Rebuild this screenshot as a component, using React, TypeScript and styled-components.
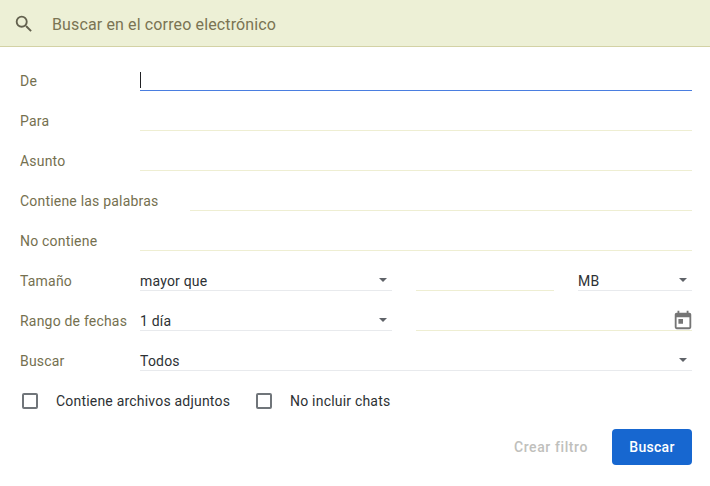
import React from 'react';
import styled, {createGlobalStyle} from 'styled-components';

const labelColor = '#75704f';
const softLine = '#eeeed2';
const greyLine = '#e8eaed';

const GlobalStyle = createGlobalStyle`
  html, body {
    margin: 0;
    padding: 0;
    background: #fff;
  }
  body {
    font-family: Roboto, "Liberation Sans", sans-serif;
    font-size: 14px;
    letter-spacing: 0.2px;
    color: #3c4043;
  }
`;

const Panel = styled.div`
  width: 710px;
  height: 486px;
  overflow: hidden;
`;

const SearchBar = styled.header`
  display: flex;
  align-items: center;
  box-sizing: border-box;
  height: 47px;
  padding-left: 13px;
  background: #edf0d6;
  border-bottom: 1px solid #d3d2a5;
`;

const SearchIcon = styled.svg`
  width: 22px;
  height: 22px;
  margin-top: 2px;
  margin-right: 17px;
  fill: #63614e;
`;

const SearchText = styled.span`
  padding-top: 2px;
  font-size: 16px;
  letter-spacing: 0.13px;
  color: #7a7453;
`;

const Form = styled.form`
  display: flex;
  flex-direction: column;
  padding: 4px 18px 0 20px;
`;

const Row = styled.div`
  display: flex;
  align-items: flex-end;
  height: 40px;
`;

const Label = styled.label<{$width?: number}>`
  flex: none;
  width: ${p => p.$width ?? 120}px;
  height: 20px;
  line-height: 20px;
  color: ${labelColor};
`;

const Field = styled.div<{$focused?: boolean; $width?: number; $gap?: number}>`
  position: relative;
  display: flex;
  align-items: center;
  justify-content: flex-end;
  box-sizing: border-box;
  flex: ${p => (p.$width ? 'none' : '1')};
  width: ${p => (p.$width ? `${p.$width}px` : 'auto')};
  height: 21px;
  margin-left: ${p => p.$gap ?? 0}px;
  border-bottom: 1px solid ${p => (p.$focused ? '#4a7ee0' : softLine)};
`;

const Caret = styled.span`
  position: absolute;
  left: 0;
  top: 2px;
  width: 1px;
  height: 16px;
  background: #202124;
`;

const Select = styled.div<{$width?: number; $gap?: number}>`
  display: flex;
  align-items: center;
  justify-content: space-between;
  box-sizing: border-box;
  flex: ${p => (p.$width ? 'none' : '1')};
  width: ${p => (p.$width ? `${p.$width}px` : 'auto')};
  height: 21px;
  margin-left: ${p => p.$gap ?? 0}px;
  border-bottom: 1px solid ${greyLine};
  line-height: 20px;
  color: #2d3134;
`;

const SelectValue = styled.span`
  padding-top: 2px;
`;

const Arrow = styled.span`
  width: 0;
  height: 0;
  margin-right: 5px;
  border-left: 4.5px solid transparent;
  border-right: 4.5px solid transparent;
  border-top: 4px solid #5f6368;
`;

const CalendarIcon = styled.svg`
  width: 22px;
  height: 22px;
  margin-right: -2px;
  margin-bottom: 1px;
  fill: #757575;
`;

const CheckRow = styled.div`
  display: flex;
  align-items: center;
  height: 20px;
  margin-top: 20px;
  padding-left: 2px;
`;

const Check = styled.label`
  display: flex;
  align-items: center;
  margin-right: 26px;
  color: #2d3134;
`;

const Box = styled.span`
  box-sizing: border-box;
  width: 16px;
  height: 16px;
  margin-right: 18px;
  border: 2px solid #70757a;
  border-radius: 2px;
`;

const Actions = styled.div`
  display: flex;
  align-items: center;
  justify-content: flex-end;
  margin-top: 18px;
`;

const GhostButton = styled.span`
  margin-right: 24px;
  font-weight: 500;
  letter-spacing: 0.6px;
  color: #bfc0bc;
`;

const PrimaryButton = styled.button`
  box-sizing: border-box;
  width: 80px;
  height: 36px;
  padding: 0;
  border: 0;
  border-radius: 4px;
  background: #1767d0;
  color: #fff;
  font: 500 14px Roboto, "Liberation Sans", sans-serif;
  letter-spacing: 0.3px;
`;

const App: React.FC = () => (
  <Panel>
    <GlobalStyle />
    <SearchBar>
      <SearchIcon viewBox="0 0 24 24">
        <path d="M15.5 14h-.79l-.28-.27A6.47 6.47 0 0 0 16 9.5 6.5 6.5 0 1 0 9.5 16c1.61 0 3.09-.59 4.23-1.57l.27.28v.79l5 4.99L20.49 19l-4.99-5zm-6 0C7.01 14 5 11.99 5 9.5S7.01 5 9.5 5 14 7.01 14 9.5 11.99 14 9.5 14z" />
      </SearchIcon>
      <SearchText>Buscar en el correo electrónico</SearchText>
    </SearchBar>
    <Form>
      <Row>
        <Label>De</Label>
        <Field $focused>
          <Caret />
        </Field>
      </Row>
      <Row>
        <Label>Para</Label>
        <Field />
      </Row>
      <Row>
        <Label>Asunto</Label>
        <Field />
      </Row>
      <Row>
        <Label $width={170}>Contiene las palabras</Label>
        <Field />
      </Row>
      <Row>
        <Label>No contiene</Label>
        <Field />
      </Row>
      <Row>
        <Label>Tamaño</Label>
        <Select $width={252}>
          <SelectValue>mayor que</SelectValue>
          <Arrow />
        </Select>
        <Field $width={138} $gap={24} />
        <Select $gap={24}>
          <SelectValue>MB</SelectValue>
          <Arrow />
        </Select>
      </Row>
      <Row>
        <Label>Rango de fechas</Label>
        <Select $width={252}>
          <SelectValue>1 día</SelectValue>
          <Arrow />
        </Select>
        <Field $gap={24}>
          <CalendarIcon viewBox="0 0 24 24">
            <path d="M19 4h-1V2h-2v2H8V2H6v2H5a2 2 0 0 0-2 2v14a2 2 0 0 0 2 2h14a2 2 0 0 0 2-2V6a2 2 0 0 0-2-2zm0 16H5V9h14v11zM7 11h5v5H7z" />
          </CalendarIcon>
        </Field>
      </Row>
      <Row>
        <Label>Buscar</Label>
        <Select>
          <SelectValue>Todos</SelectValue>
          <Arrow />
        </Select>
      </Row>
      <CheckRow>
        <Check>
          <Box />
          Contiene archivos adjuntos
        </Check>
        <Check>
          <Box />
          No incluir chats
        </Check>
      </CheckRow>
      <Actions>
        <GhostButton>Crear filtro</GhostButton>
        <PrimaryButton type="button">Buscar</PrimaryButton>
      </Actions>
    </Form>
  </Panel>
);

export default App;
